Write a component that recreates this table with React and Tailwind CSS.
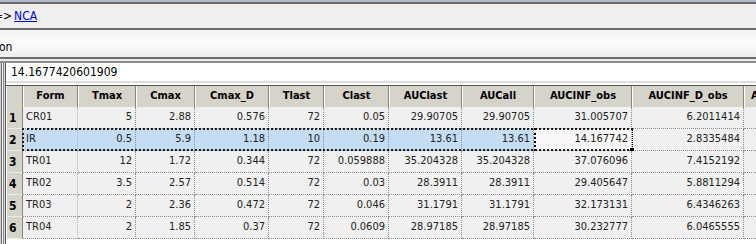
import React from "react";

const cols = [
  { key: "Form", w: "w-[55px]", align: "left" },
  { key: "Tmax", w: "w-[58px]" },
  { key: "Cmax", w: "w-[59px]" },
  { key: "Cmax_D", w: "w-[74px]" },
  { key: "Tlast", w: "w-[55px]" },
  { key: "Clast", w: "w-[65px]" },
  { key: "AUClast", w: "w-[73px]" },
  { key: "AUCall", w: "w-[72px]" },
  { key: "AUCINF_obs", w: "w-[98px]" },
  { key: "AUCINF_D_obs", w: "w-[112px]" },
];

const rows = [
  ["CR01", "5", "2.88", "0.576", "72", "0.05", "29.90705", "29.90705", "31.005707", "6.2011414"],
  ["IR", "0.5", "5.9", "1.18", "10", "0.19", "13.61", "13.61", "14.167742", "2.8335484"],
  ["TR01", "12", "1.72", "0.344", "72", "0.059888", "35.204328", "35.204328", "37.076096", "7.4152192"],
  ["TR02", "3.5", "2.57", "0.514", "72", "0.03", "28.3911", "28.3911", "29.405647", "5.8811294"],
  ["TR03", "2", "2.36", "0.472", "72", "0.046", "31.1791", "31.1791", "32.173131", "6.4346263"],
  ["TR04", "2", "1.85", "0.37", "72", "0.0609", "28.97185", "28.97185", "30.232777", "6.0465555"],
];

function HeaderCell({ children, w }) {
  return (
    <div
      className={`${w} h-full shrink-0 flex items-center justify-center bg-[#d6d3cb] border-l border-l-white border-r border-r-[#8a877f] font-bold text-[11px] text-black`}
    >
      {children}
    </div>
  );
}

function Row({ data, idx }) {
  const selected = idx === 1;
  return (
    <div className="relative flex h-[22px] shrink-0">
      <div className="w-[17px] shrink-0 h-full bg-[#d6d3cb] border-l border-l-white border-r border-r-[#8a877f] border-b border-b-[#efece6] flex items-center pl-[2px] pt-[1px] font-bold text-[12px] text-black">
        {idx + 1}
      </div>
      {cols.map((c, ci) => {
        const active = selected && ci === 8;
        const blue = selected && ci < 8;
        return (
          <div
            key={c.key}
            className={`${c.w} shrink-0 h-full flex items-center text-[11px] text-[#222] border-b border-dotted border-b-[#8d8d8d] ${
              ci === 0 ? "border-r border-r-[#9fb2cf] border-dotted justify-start pl-[3px]" : "border-r border-dotted border-r-[#8d8d8d] justify-end pr-[3px]"
            } ${blue ? "bg-[#c4dcf4]" : active ? "bg-[#f7f7f7]" : "bg-[#f0f0f0]"}`}
          >
            {data[ci]}
          </div>
        );
      })}
      <div className="w-[100px] shrink-0 h-full bg-[#f0f0f0] border-b border-dotted border-b-[#8d8d8d]" />
      {selected && (
        <>
          <div className="absolute left-[16px] top-[-1px] w-[611px] h-[23px] border-y-2 border-dotted border-y-[#1a1a1a] border-l-2 border-l-[#1a1a1a] pointer-events-none" />
          <div className="absolute left-[528px] top-[-1px] w-[99px] h-[23px] border-l-2 border-l-black border-r border-dotted border-r-black pointer-events-none" />
          <div className="absolute left-[624px] top-[19px] w-[4px] h-[4px] bg-black pointer-events-none" />
        </>
      )}
    </div>
  );
}

export default function App() {
  return (
    <div className="w-[756px] h-[244px] overflow-hidden bg-white font-['DejaVu_Sans_Condensed','DejaVu_Sans',sans-serif] flex flex-col">
      <div className="h-[2px] shrink-0 bg-[#b3b8cc]" />
      <div className="h-[2px] shrink-0 bg-[#6b6b6b]" />
      <div className="h-[24px] shrink-0 bg-[#efefef] flex items-center text-[12px] text-black whitespace-nowrap">
        <span className="-ml-[6px]">=&gt;</span>
        <a href="#" className="ml-[2px] text-[#0000dd] underline">NCA</a>
      </div>
      <div className="h-[2px] shrink-0 bg-[#6b6b6b]" />
      <div className="h-[27px] shrink-0 bg-gradient-to-b from-[#f3f3f3] via-[#fbfbfb] to-[#ededed] flex items-center pt-[7px] text-[12px] text-black">
        <span className="-ml-[1px]">on</span>
      </div>
      <div className="h-[2px] shrink-0 bg-[#6b6b6b]" />
      <div className="h-[2px] shrink-0 bg-[#ebebeb]" />
      <div className="h-[2px] shrink-0 bg-[#8c8c8c]" />
      <div className="flex flex-1 min-h-0">
        <div className="flex shrink-0">
          <div className="w-px bg-[#d0d0d0]" />
          <div className="w-px bg-[#6b6b6b]" />
          <div className="w-px bg-[#f4f4f4]" />
          <div className="w-px bg-[#8a8a8a]" />
          <div className="w-px bg-[#d8d8d8]" />
          <div className="w-px bg-[#5a5a5a]" />
        </div>
        <div className="flex flex-col flex-1 min-w-0">
          <div className="h-[18px] shrink-0 bg-white flex items-center pl-[5px] text-[12px] text-black">
            14.1677420601909
          </div>
          <div className="h-[2px] shrink-0 bg-[#dcdcdc]" />
          <div className="h-[2px] shrink-0 bg-white" />
          <div className="h-px shrink-0 bg-[#555]" />
          <div className="flex flex-col bg-[#f0f0f0]">
            <div className="flex h-[21px] shrink-0">
              <div className="w-[17px] shrink-0 h-full bg-[#d6d3cb] border-l border-l-white border-r border-r-[#8a877f]" />
              {cols.map((c) => (
                <HeaderCell key={c.key} w={c.w}>
                  {c.key}
                </HeaderCell>
              ))}
              <div className="w-[100px] shrink-0 h-full bg-[#d6d3cb] border-l border-l-white flex items-center pl-[6px] font-bold text-[11px] text-black">
                AUClast_D
              </div>
            </div>
            {rows.map((r, i) => (
              <Row key={i} data={r} idx={i} />
            ))}
          </div>
        </div>
      </div>
    </div>
  );
}
